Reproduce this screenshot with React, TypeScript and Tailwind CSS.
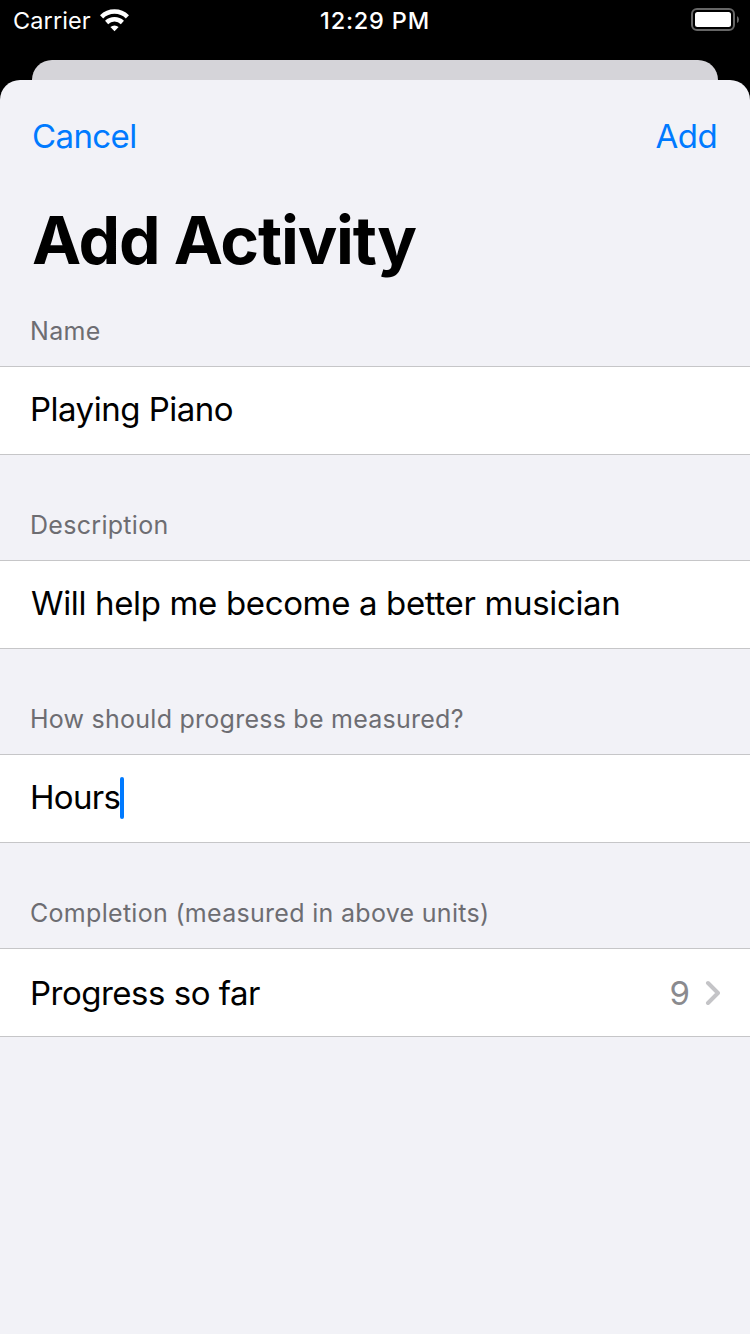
import type { ReactNode } from 'react';

function Section({ label, tracking, children }: { label: string; tracking: string; children: ReactNode }) {
  return (
    <section>
      <h2 className={`pb-5 pl-[30px] text-[25px] leading-[30px] text-[#6d6d72] ${tracking}`}>{label}</h2>
      <div className="flex h-[89px] items-center border-y border-[#c6c6c8] bg-white pr-[30px] pl-[30px] text-[33px] leading-[40px] text-black">
        {children}
      </div>
    </section>
  );
}

function WifiIcon() {
  return (
    <svg width="30" height="23" viewBox="0 0 30 23" fill="none" stroke="white" strokeWidth="4.5">
      <path d="M1.6 7.8A18.5 18.5 0 0 1 27.4 7.8" />
      <path d="M6.6 13.5A11.5 11.5 0 0 1 22.4 13.5" />
      <path d="M14.5 22.2L10.4 18A6 6 0 0 1 18.6 18Z" fill="white" stroke="none" />
    </svg>
  );
}

function BatteryIcon() {
  return (
    <svg width="49" height="23" viewBox="0 0 49 23">
      <rect x="1" y="1" width="42" height="21" rx="5" fill="none" stroke="#666" strokeWidth="2" />
      <rect x="4" y="4" width="36" height="15" rx="2.5" fill="white" />
      <path d="M46 8Q48 9 48 11.5T46 15Z" fill="#666" />
    </svg>
  );
}

export default function App() {
  return (
    <div className="flex h-[1334px] w-[750px] flex-col overflow-hidden bg-black font-['Inter',sans-serif]">
      <header className="grid h-[60px] grid-cols-3 items-start text-[23.5px] leading-[42px] text-white">
        <div className="flex pl-[13px]">
          <span className="w-[87px] tracking-[0.1px]">Carrier</span>
          <div className="pt-[9px]"><WifiIcon /></div>
        </div>
        <span className="text-center font-medium tracking-[0.8px]">12:29 PM</span>
        <div className="flex justify-end pt-2 pr-[10px]"><BatteryIcon /></div>
      </header>
      <div className="mx-8 h-5 shrink-0 rounded-t-[20px] bg-[#d5d4d9]" />
      <main className="flex-1 rounded-t-[20px] bg-[#f2f2f7]">
        <nav className="flex justify-between pt-9 pr-[33px] pl-8 text-[33px] leading-[40px] tracking-[-0.6px] text-[#007aff]">
          <button>Cancel</button>
          <button>Add</button>
        </nav>
        <h1 className="mt-[44px] pl-8 text-[66px] leading-[80px] font-bold tracking-[-1.2px] text-black">Add Activity</h1>
        <div className="mt-9 flex flex-col gap-[55px]">
          <Section label="Name" tracking="tracking-[0.3px]">
            <span className="pb-[3px] tracking-[-0.5px]">Playing Piano</span>
          </Section>
          <Section label="Description" tracking="tracking-[0.3px]">
            <span className="pb-[3px] pl-px tracking-[-0.35px]">Will help me become a better musician</span>
          </Section>
          <Section label="How should progress be measured?" tracking="tracking-[0.25px]">
            <span className="pb-[3px] tracking-[-0.7px]">Hours</span>
            <span className="mb-[2px] h-[42px] w-1 rounded-full bg-[#007aff]" />
          </Section>
          <Section label="Completion (measured in above units)" tracking="tracking-[0.3px]">
            <span className="tracking-[-0.5px]">Progress so far</span>
            <span className="ml-auto text-[#8a8a8e]">9</span>
            <svg className="ml-[15px]" width="15" height="26" viewBox="0 0 15 26" fill="none" stroke="#c4c4c7" strokeWidth="4" strokeLinecap="round" strokeLinejoin="round">
              <path d="M3 3L13 13L3 23" />
            </svg>
          </Section>
        </div>
      </main>
    </div>
  );
}
